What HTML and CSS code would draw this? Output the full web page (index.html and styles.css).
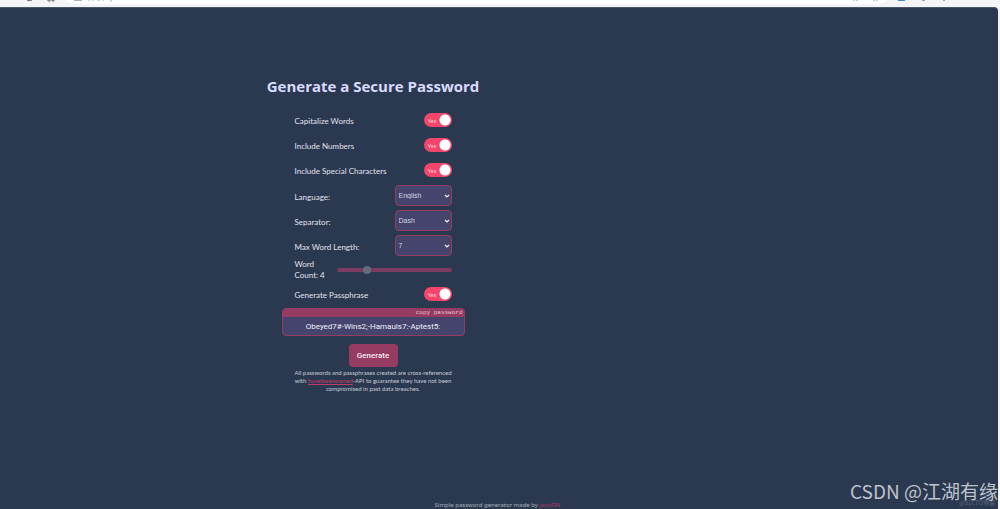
FILE: index.html
```
<!DOCTYPE html>
<html lang="en">
<head>
<meta charset="utf-8">
<title>Password generator</title>
<link rel="stylesheet" href="styles.css">
</head>
<body>
<div class="chrome" aria-hidden="true">
  <svg class="chrome-left" width="120" height="7" viewBox="0 0 120 7"><path d="M66 0Q68 4 75 4H120V0Z" fill="#fff"/><g fill="none" stroke="#666" stroke-width="1"><path d="M27 0q2 1.500 5 0M48 0v1h2V0M52 0v1h2V0M74 0h8"/><path d="M88 0h2M92 0h2M97 0h3M102 0h2M111 0v2" stroke="#aaa"/></g></svg>
  <span class="address"></span>
  <svg class="chrome-right" width="160" height="7" viewBox="0 0 160 7"><path d="M0 0H47Q45 4 38 4H0Z" fill="#fff"/><path d="M13 0h2M16 0h2M33 0h2M36 0h2" stroke="#999"/><path d="M58 0h7v1h-7z" fill="#3b8edb"/><path d="M82 0h3M104 0v1" stroke="#555"/></svg>
</div>
<div class="page">
  <main class="generator">
    <h1 class="title">Generate a Secure Password</h1>
    <form class="form">
      <div class="row"><label for="caps">Capitalize Words</label><span class="switch"><input id="caps" type="checkbox" checked><span class="yes">Yes</span></span></div>
      <div class="row"><label for="nums">Include Numbers</label><span class="switch"><input id="nums" type="checkbox" checked><span class="yes">Yes</span></span></div>
      <div class="row toggle-end"><label for="special">Include Special Characters</label><span class="switch"><input id="special" type="checkbox" checked><span class="yes">Yes</span></span></div>
      <div class="row"><label for="lang">Language:</label><span class="picker"><select id="lang"><option>English</option></select><svg width="6" height="4" viewBox="0 0 6 4"><path d="M1 1l2 2 2-2"/></svg></span></div>
      <div class="row"><label for="sep">Separator:</label><span class="picker"><select id="sep"><option>Dash</option></select><svg width="6" height="4" viewBox="0 0 6 4"><path d="M1 1l2 2 2-2"/></svg></span></div>
      <div class="row"><label for="len">Max Word Length:</label><span class="picker"><select id="len"><option>7</option></select><svg width="6" height="4" viewBox="0 0 6 4"><path d="M1 1l2 2 2-2"/></svg></span></div>
      <div class="row slider-row"><label for="count">Word Count: 4</label><input id="count" class="slider" type="range" min="2" max="10" value="4"></div>
      <div class="row"><label for="phrase">Generate Passphrase</label><span class="switch"><input id="phrase" type="checkbox" checked><span class="yes">Yes</span></span></div>
    </form>
    <div class="result">
      <button class="copy" type="button">copy password</button>
      <input class="password" type="text" aria-label="Password" value="Obeyed7#-Wins2;-Hamauls7:-Aptest5:" readonly>
    </div>
    <button class="generate" type="button">Generate</button>
    <p class="note">All passwords and passphrases created are cross-referenced with <a class="owned" href="#">haveibeenowned</a>-API to guarantee they have not been compromised in past data breaches.</p>
  </main>
  <footer class="footer">Simple password generator made by <a href="#">jocxFIN</a></footer>
  <div class="stamp">@51CTO博客</div>
  <div class="watermark">CSDN @江湖有缘</div>
</div>
</body>
</html>
```
FILE: styles.css
```
* { box-sizing: border-box; }
body {
  margin: 0;
  height: 100vh;
  display: flex;
  flex-direction: column;
  overflow: hidden;
  background: #f3f4f8;
  color: #e0e2ee;
  font: 8px/11px Lato, "Noto Sans", sans-serif;
}
.chrome { display: flex; height: 7px; flex: none; background: #f3f4f8; }
.address { flex: 1; height: 4px; background: #fff; }
.page {
  position: relative;
  flex: 1;
  min-height: 0;
  display: flex;
  flex-direction: column;
  margin-right: 2px;
  padding-top: 67px;
  background: #2b3950;
  border-top: 1px solid #4b5568;
  border-radius: 0 4px 0 0;
}
.generator {
  display: flex;
  flex-direction: column;
  align-items: center;
  width: 210px;
  margin-left: 268px;
}
.title {
  margin: 0;
  color: #d8dbff;
  font: bold 15px/22px "Open Sans", "Noto Sans", sans-serif;
  white-space: nowrap;
}
.form { width: 157px; margin-top: 10px; }
.row {
  display: flex;
  align-items: center;
  justify-content: space-between;
  height: 25px;
}
.row label { padding-top: 4px; }
.toggle-end { margin-bottom: 1px; }
.switch { position: relative; display: flex; }
.switch input {
  appearance: none;
  width: 28px;
  height: 14px;
  margin: 0;
  border-radius: 7px;
  background: radial-gradient(circle at 21px 7px, #fff 5px, transparent 6px) #f2456a;
}
.yes {
  position: absolute;
  left: 4px;
  top: 2px;
  color: #ffc4d0;
  font-size: 6px;
  pointer-events: none;
}
.picker { position: relative; display: flex; }
.picker select {
  appearance: none;
  width: 57px;
  height: 21px;
  padding: 0 3px;
  border: 1px solid #963c62;
  border-radius: 4px;
  background: #44446c;
  color: #d4d4e8;
  font: 7px "Liberation Sans", sans-serif;
}
.picker svg {
  position: absolute;
  right: 2px;
  top: 9px;
  fill: none;
  stroke: #f2f2fa;
  stroke-width: 1.2;
  pointer-events: none;
}
.slider-row { height: 23px; gap: 10px; }
.slider-row label { width: 32px; padding-top: 1px; }
.slider {
  appearance: none;
  flex: 1;
  min-width: 0;
  height: 4px;
  margin: 0;
  border-radius: 2px;
  background: #7c3c60;
}
.slider::-webkit-slider-thumb {
  appearance: none;
  width: 8px;
  height: 8px;
  border-radius: 50%;
  background: #626d7c;
}
.result {
  display: flex;
  flex-direction: column;
  width: 183px;
  margin-top: 2px;
  border: 1px solid #963c62;
  border-radius: 4px;
  background: #44446c;
  overflow: hidden;
}
.copy {
  height: 8px;
  padding: 0 1px;
  border: 0;
  background: #963c62;
  color: #e4c4d4;
  font: 6px/8px "Liberation Mono", monospace;
  text-align: right;
}
.password {
  height: 18px;
  padding: 0;
  border: 0;
  background: transparent;
  color: #f0f0fa;
  font: 8px Roboto, sans-serif;
  text-align: center;
}
.generate {
  width: 49px;
  height: 23px;
  margin-top: 8px;
  padding: 0;
  border: 0;
  border-radius: 4px;
  background: #963c62;
  color: #f4eaf2;
  font: 500 8px Roboto, sans-serif;
}
.note {
  width: 164px;
  margin: 2px 0 0;
  color: #c6cbd7;
  font-size: 6px;
  line-height: 8px;
  text-align: center;
}
.footer {
  margin-top: auto;
  padding-right: 3px;
  color: #a8afbd;
  font: 6px/8px "Noto Sans", sans-serif;
  text-align: center;
}
a { color: #b8346a; text-decoration: none; }
.owned { color: #c23a68; text-decoration: underline; }
.watermark {
  position: absolute;
  right: 0;
  bottom: 4px;
  color: #bdc2cc;
  font: 19px/28px "Noto Sans CJK SC", sans-serif;
}
.stamp {
  position: absolute;
  right: 3px;
  bottom: 2px;
  color: #59657b;
  font: 6px/8px "Noto Sans CJK SC", sans-serif;
}
```
